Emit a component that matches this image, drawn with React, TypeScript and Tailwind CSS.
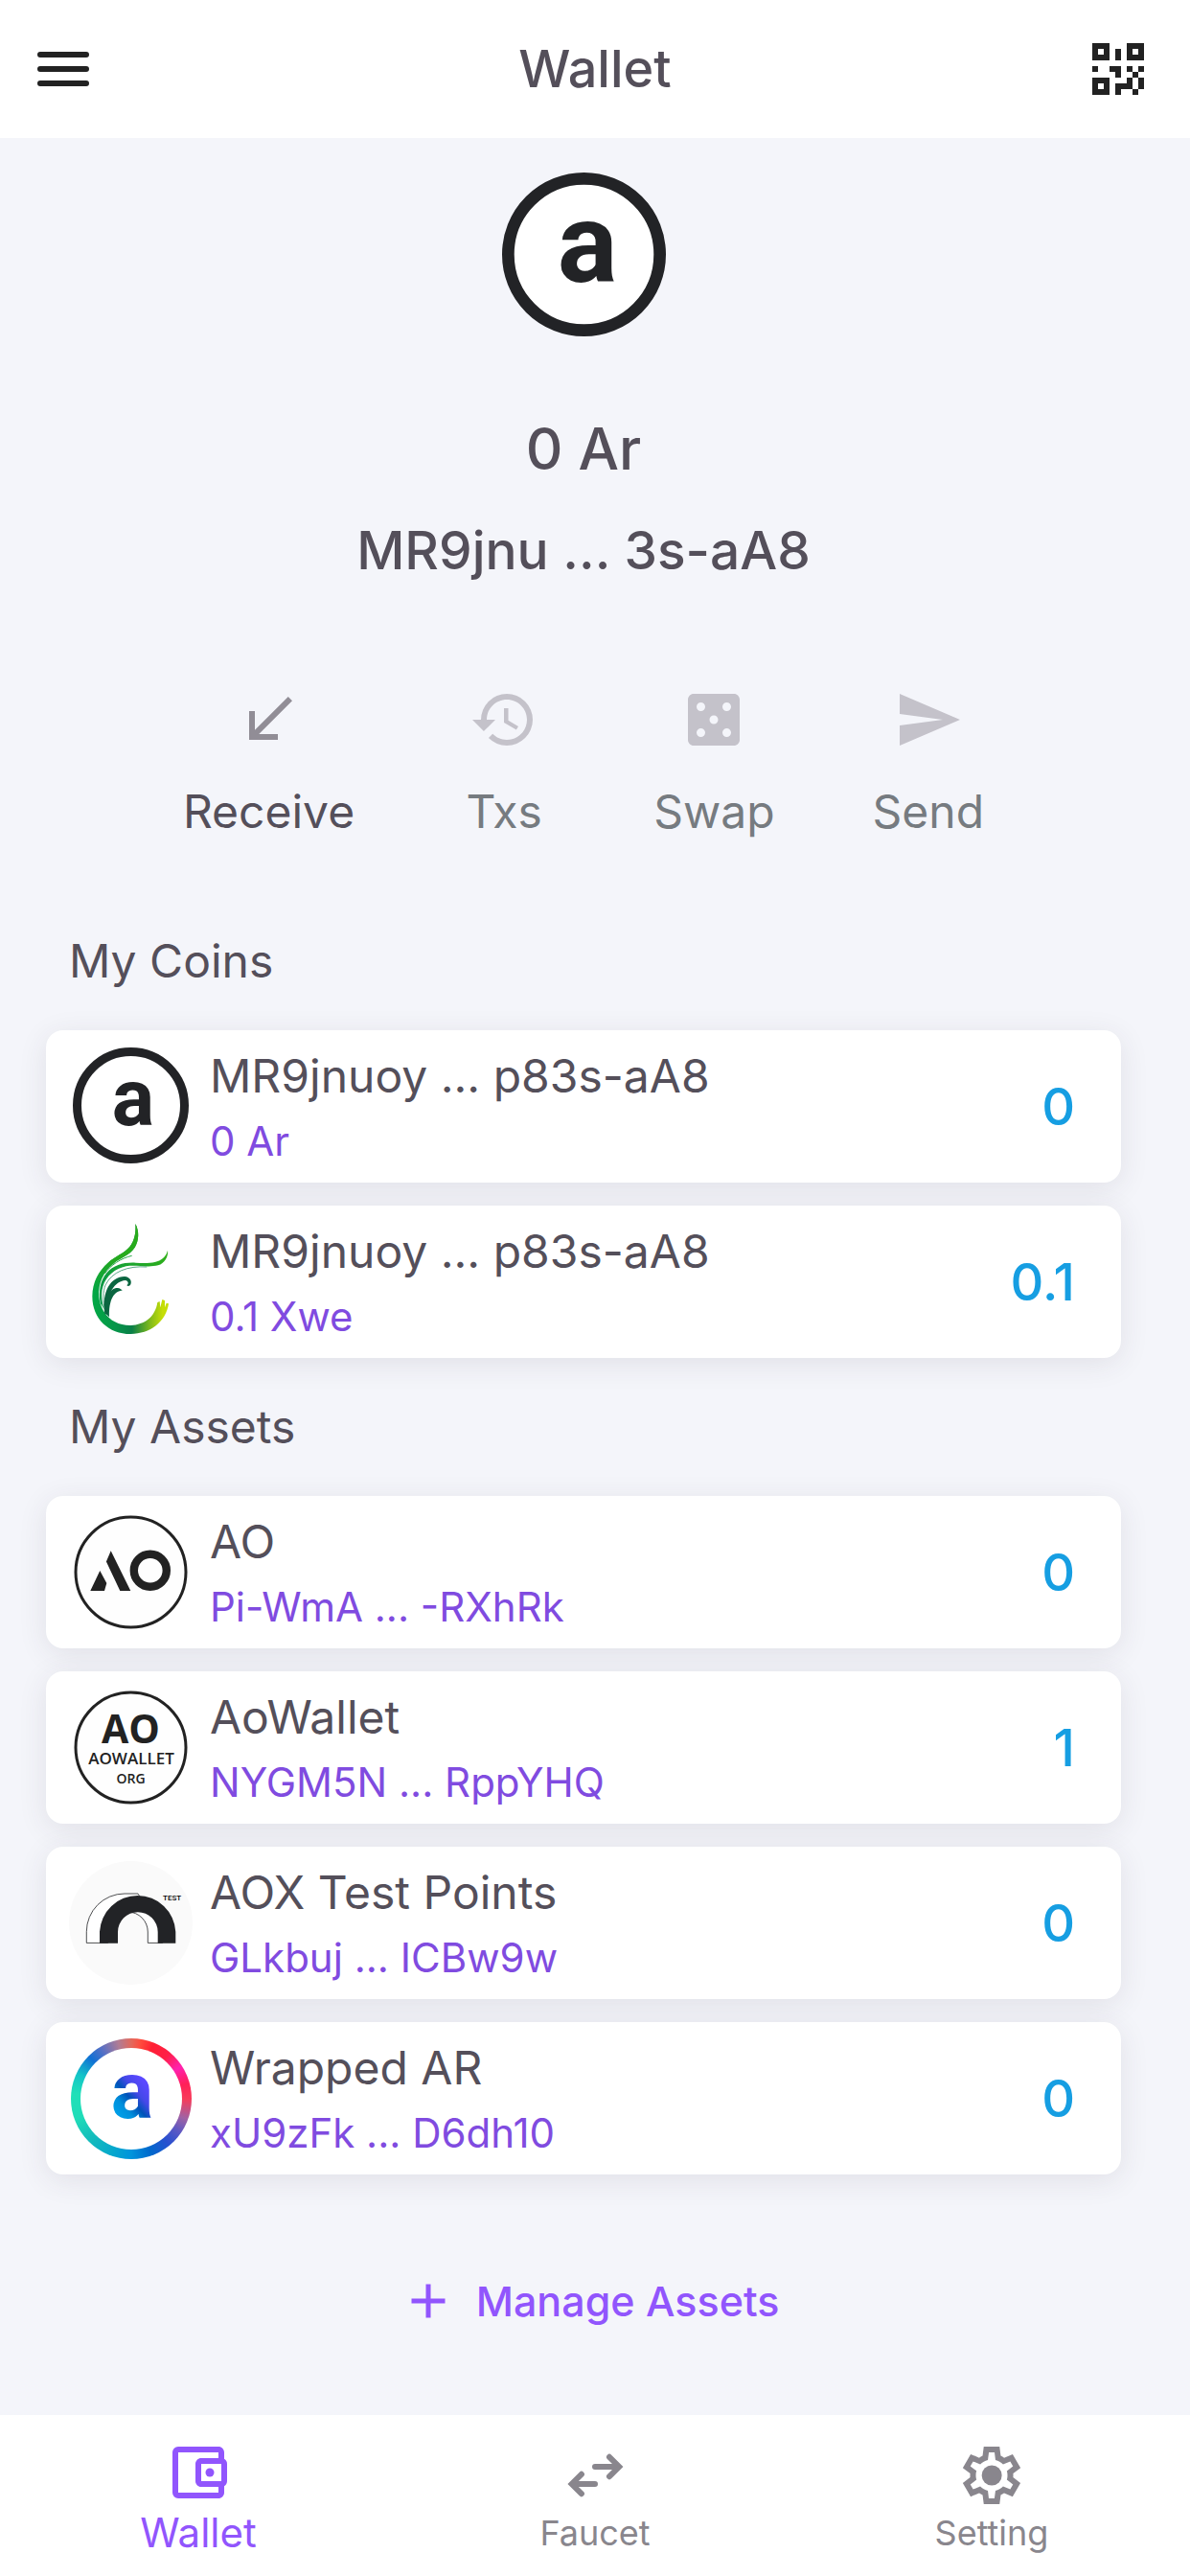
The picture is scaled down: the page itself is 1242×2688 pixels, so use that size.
import type { ReactNode } from 'react';
import { MdAdd, MdCallReceived, MdCasino, MdHistory, MdOutlineAccountBalanceWallet, MdSend } from 'react-icons/md';

function MenuIcon() {
  return (
    <svg viewBox="0 0 24 24" className="size-18" fill="none" stroke="currentColor" strokeWidth="2" strokeLinecap="round" aria-hidden="true">
      <path d="M4 7h16M4 12h16M4 17h16" />
    </svg>
  );
}

function QrIcon() {
  return (
    <svg viewBox="0 0 24 24" className="size-18" fill="currentColor" aria-hidden="true">
      <path d="M3 11H5V13H3V11M11 5H13V9H11V5M9 11H13V15H11V13H9V11M15 11H17V13H19V11H21V13H19V15H21V19H19V21H17V19H13V21H11V17H15V15H17V13H15V11M19 19V15H17V19H19M15 3H21V9H15V3M17 5V7H19V5H17M3 3H9V9H3V3M5 5V7H7V5H5M3 15H9V21H3V15M5 17V19H7V17H5Z" />
    </svg>
  );
}

function SwapIcon() {
  return (
    <svg viewBox="0 0 24 24" className="size-18" fill="none" stroke="currentColor" strokeWidth="2" strokeLinecap="round" aria-hidden="true">
      <path d="M12 9h8M17 5.6l3.4 3.4l-3.4 3.4M12 15H4M7.3 11.6L3.9 15l3.4 3.4" />
    </svg>
  );
}

function GearIcon() {
  return (
    <svg viewBox="0 0 24 24" className="size-18" fill="currentColor" aria-hidden="true">
      <path
        fillRule="evenodd"
        d="m9.25 22l-.4-3.2q-.325-.125-.612-.3t-.563-.375L4.7 19.375l-2.75-4.75l2.575-1.95Q4.5 12.5 4.5 12.338v-.675q0-.163.025-.338L1.95 9.375l2.75-4.75l2.975 1.25q.275-.2.575-.375t.6-.3l.4-3.2h5.5l.4 3.2q.325.125.613.3t.562.375l2.975-1.25l2.75 4.75l-2.575 1.95q.025.175.025.338v.674q0 .163-.05.338l2.575 1.95l-2.75 4.75l-2.95-1.25q-.275.2-.575.375t-.6.3l-.4 3.2zM11 20h1.975l.35-2.65q.775-.2 1.438-.587t1.212-.938l2.475 1.025l.975-1.7l-2.15-1.625q.125-.35.175-.737T17.5 12t-.05-.787t-.175-.738l2.15-1.625l-.975-1.7l-2.475 1.05q-.55-.575-1.212-.962t-1.438-.588L13 4h-1.975l-.35 2.65q-.775.2-1.437.588t-1.213.937L5.55 7.15l-.975 1.7l2.15 1.6q-.125.375-.175.75t-.05.8q0 .4.05.775t.175.75l-2.15 1.625l.975 1.7l2.475-1.05q.55.575 1.213.963t1.437.587z"
      />
      <circle cx="12.05" cy="12" r="3.5" />
    </svg>
  );
}

function ArweaveShapes() {
  return (
    <>
      <circle cx="64.5" cy="63.5" r="56" fill="#fff" stroke="#222326" strokeWidth="9" />
      <text x="67" y="84" textAnchor="middle" fontFamily="Roboto, sans-serif" fontWeight="700" fontSize="83" fill="#222326">a</text>
    </>
  );
}

function ArweaveLogo() {
  return <svg viewBox="0 0 129 129" className="size-[129px]" aria-hidden="true"><ArweaveShapes /></svg>;
}

function XweLogo() {
  return (
    <svg viewBox="6 576 387 387" className="size-[129px]" aria-hidden="true">
      <defs>
        <linearGradient id="xwe-ring" gradientUnits="userSpaceOnUse" x1="79" y1="0" x2="318" y2="0">
          <stop offset="0" stopColor="#02a845" />
          <stop offset="0.3" stopColor="#06964a" />
          <stop offset="0.52" stopColor="#0a7f47" />
          <stop offset="0.75" stopColor="#7db81c" />
          <stop offset="0.92" stopColor="#c5de06" />
        </linearGradient>
        <linearGradient id="xwe-fade" gradientUnits="userSpaceOnUse" x1="0" y1="690" x2="0" y2="800">
          <stop offset="0" stopColor="#27ab1c" />
          <stop offset="1" stopColor="#27ab1c" stopOpacity="0" />
        </linearGradient>
        <linearGradient id="xwe-leaf" gradientUnits="userSpaceOnUse" x1="315" y1="680" x2="105" y2="830">
          <stop offset="0" stopColor="#30b018" />
          <stop offset="1" stopColor="#04964a" />
        </linearGradient>
      </defs>
      <path fill="url(#xwe-ring)" d="M214 588C226 610 226 640 212 662C196 686 168 694 148 710C112 738 97 775 100 815C101 830 106 850 118 866C132 890 165 907 200 906C242 904 276 880 283 834L290 831L292 850L298 825L306 828L306 850L311 836L318 838C310 895 260 933 199 933C130 933 79 885 79 815C79 770 100 735 128 710C150 690 180 680 196 660C212 640 216 615 214 588Z" />
      <path fill="url(#xwe-fade)" d="M214 588C226 610 226 640 212 662C196 686 168 694 148 710C112 738 97 775 100 815L79 815C79 770 100 735 128 710C150 690 180 680 196 660C212 640 216 615 214 588Z" />
      <path fill="url(#xwe-leaf)" d="M315 671C318 690 305 712 285 718C255 726 215 716 185 721C150 728 122 752 112 785C106 805 108 830 116 856L104 836C98 800 104 765 124 742C146 716 180 708 215 710C250 712 282 712 300 696C308 690 313 680 315 671Z" />
      <path fill="none" stroke="#2aa84a" strokeWidth="3" d="M203 688C170 695 135 718 118 744" />
      <path fill="none" stroke="#0b7a4c" strokeWidth="2" d="M250 723C190 719 140 738 120 780C112 800 112 830 118 855" />
      <path fill="#0a6640" d="M118 870C108 800 136 754 180 753C197 754 204 768 199 778C196 784 189 784 187 780C194 776 192 767 182 765C150 768 122 805 126 872Z" />
      <path fill="#0a6640" d="M124 872C116 820 133 789 158 789C166 790 170 793 173 797C148 797 130 825 132 880Z" />
    </svg>
  );
}

function AoLogo() {
  return (
    <svg viewBox="0 0 129 129" className="size-[129px]" aria-hidden="true">
      <circle cx="64.5" cy="64.5" r="57.5" fill="#fefefe" stroke="#222" strokeWidth="3" />
      <path fill="#222" d="M43.7 42.3L64.3 84H53.3L38.9 53.5ZM32.3 63L39.3 76L37 84H22.3Z" />
      <circle cx="84.8" cy="62.8" r="17" fill="none" stroke="#222" strokeWidth="8.4" />
    </svg>
  );
}

function AoWalletLogo() {
  return (
    <svg viewBox="0 0 129 129" className="size-[129px]" fontFamily="'Open Sans', sans-serif" fontWeight="700" textAnchor="middle" fill="#222" aria-hidden="true">
      <circle cx="64.5" cy="64.5" r="57.5" fill="#fefefe" stroke="#222" strokeWidth="3" />
      <text x="64.5" y="60" fontSize="41">AO</text>
      <text x="65" y="82" fontSize="17" fontWeight="600">AOWALLET</text>
      <text x="64.5" y="102" fontSize="14" fontWeight="600">ORG</text>
    </svg>
  );
}

function AoxLogo() {
  return (
    <svg viewBox="0 0 129 129" className="size-[129px]" aria-hidden="true">
      <circle cx="64.5" cy="64.5" r="64.5" fill="#fafafa" />
      <path fill="#fff" stroke="#222326" strokeWidth="0.8" d="M18.3 85.4V73.7A39.7 39.7 0 0 1 58 34H72L97.7 73.7V85.4H82.3V74A21 21 0 0 0 61.5 53A21 21 0 0 0 40.7 74V85.4Z" />
      <path fill="#222326" d="M32 85.8V73.7A39.7 39.7 0 0 1 111.3 73.7V85.8H92.7V74A20.8 20.8 0 0 0 51 74V85.8Z" />
      <text x="98" y="40.7" fontFamily="Roboto, sans-serif" fontWeight="500" fontSize="8" fill="#000">TEST</text>
    </svg>
  );
}

function WrappedArLogo() {
  return (
    <div className="grid size-[129px] place-items-center" aria-hidden="true">
      <div className="size-[126px] rounded-full bg-[conic-gradient(#e2695c,#ff4a3c_10deg,#ff2034_22deg,#ff1f48_40deg,#ff22b0_57deg,#ff2058_75deg,#f83a58_90deg,#a062a4_110deg,#5a58c4_125deg,#2850d0_140deg,#0068cc_160deg,#0094dc_180deg,#06a8cc_200deg,#14bcbc_225deg,#20dcb8_250deg,#1fe0b8_275deg,#14c4c8_295deg,#1070d4_315deg,#5a70c4_330deg,#b07c94_347deg,#e2695c)]">
        <svg viewBox="0 0 126 126" className="size-[126px]">
          <defs>
            <linearGradient id="war-letter" gradientUnits="userSpaceOnUse" x1="45" y1="76" x2="78" y2="48">
              <stop offset="0" stopColor="#009fe8" />
              <stop offset="0.25" stopColor="#0090dc" />
              <stop offset="0.5" stopColor="#0052b8" />
              <stop offset="0.72" stopColor="#4548e8" />
              <stop offset="1" stopColor="#5a48ff" />
            </linearGradient>
          </defs>
          <circle cx="63" cy="63" r="53" fill="#fff" />
          <text x="64" y="83" textAnchor="middle" fontFamily="Roboto, sans-serif" fontWeight="700" fontSize="83" fill="url(#war-letter)">a</text>
        </svg>
      </div>
    </div>
  );
}

type Entry = { title: string; subtitle: string; amount: string; logo: ReactNode };

const coins: Entry[] = [
  { title: 'MR9jnuoy ... p83s-aA8', subtitle: '0 Ar', amount: '0', logo: <ArweaveLogo /> },
  { title: 'MR9jnuoy ... p83s-aA8', subtitle: '0.1 Xwe', amount: '0.1', logo: <XweLogo /> },
];

const assets: Entry[] = [
  { title: 'AO', subtitle: 'Pi-WmA ... -RXhRk', amount: '0', logo: <AoLogo /> },
  { title: 'AoWallet', subtitle: 'NYGM5N ... RppYHQ', amount: '1', logo: <AoWalletLogo /> },
  { title: 'AOX Test Points', subtitle: 'GLkbuj ... ICBw9w', amount: '0', logo: <AoxLogo /> },
  { title: 'Wrapped AR', subtitle: 'xU9zFk ... D6dh10', amount: '0', logo: <WrappedArLogo /> },
];

function Section({ title, entries }: { title: string; entries: Entry[] }) {
  return (
    <section className="pt-9">
      <h2 className="px-6 text-[48px] leading-[72px]">{title}</h2>
      <ul className="mt-9 flex flex-col gap-6">
        {entries.map((entry, i) => (
          <li key={i} className="flex items-center rounded-[18px] bg-white py-3 pr-12 pl-6 shadow-[0_6px_30px_rgba(58,53,65,0.1)]">
            <div className="-my-3 shrink-0">{entry.logo}</div>
            <div className="ml-[18px] min-w-0 flex-1">
              <p className="truncate text-[48px] leading-[72px]">{entry.title}</p>
              <p className="truncate text-[42px] leading-[63px] text-[#804be0]">{entry.subtitle}</p>
            </div>
            <p className="text-[54px] leading-[72px] font-medium text-[#169ee2]">{entry.amount}</p>
          </li>
        ))}
      </ul>
    </section>
  );
}

const actions = [
  { label: 'Receive', icon: <MdCallReceived />, enabled: true },
  { label: 'Txs', icon: <MdHistory />, enabled: false },
  { label: 'Swap', icon: <MdCasino />, enabled: false },
  { label: 'Send', icon: <MdSend />, enabled: false },
];

const tabs = [
  { label: 'Wallet', icon: <MdOutlineAccountBalanceWallet />, active: true },
  { label: 'Faucet', icon: <SwapIcon />, active: false },
  { label: 'Setting', icon: <GearIcon />, active: false },
];

export default function App() {
  return (
    <div className="flex min-h-screen flex-col bg-[#f4f5fa] font-[Inter,sans-serif] text-[#544f5a]">
      <header className="grid h-36 grid-cols-[1fr_auto_1fr] items-center bg-white">
        <button type="button" aria-label="Menu" className="justify-self-start pl-[30px] text-[#222]"><MenuIcon /></button>
        <h1 className="text-[54px] leading-[72px] font-medium">Wallet</h1>
        <button type="button" aria-label="Scan QR code" className="justify-self-end pr-[39px] text-[#222]"><QrIcon /></button>
      </header>

      <main className="flex-1 pr-18 pl-12">
        <div className="flex flex-col items-center pt-9">
          <svg viewBox="4 3 121 121" className="size-[171px]" role="img" aria-label="Arweave"><ArweaveShapes /></svg>
          <p className="mt-[69px] text-[60px] leading-[96px] font-medium">0 Ar</p>
          <p className="mt-4 text-[55px] leading-[84px] font-medium">MR9jnu ... 3s-aA8</p>
        </div>

        <div className="flex justify-center gap-[54px] pt-[99px] pb-12">
          {actions.map(({ label, icon, enabled }) => (
            <button key={label} type="button" disabled={!enabled} className="group flex min-w-[156px] flex-col items-center gap-6 px-6 text-[48px] leading-[72px] disabled:text-[#767b80]">
              <span className="text-[72px] text-[#918d96] group-disabled:text-[#c4c2ca]">{icon}</span>
              {label}
            </button>
          ))}
        </div>

        <Section title="My Coins" entries={coins} />
        <Section title="My Assets" entries={assets} />

        <div className="flex justify-center pt-[93px] pl-3">
          <button type="button" className="flex h-[78px] items-center gap-5 text-[43px] font-medium text-[#9155fd]">
            <MdAdd className="size-[60px]" />
            Manage Assets
          </button>
        </div>
      </main>

      <nav className="grid h-42 grid-cols-3 bg-white pt-1.5">
        {tabs.map(({ label, icon, active }) => (
          <a
            key={label}
            href={`#${label.toLowerCase()}`}
            aria-current={active ? 'page' : undefined}
            className="flex flex-col items-center justify-center text-[36px] leading-[48px] text-[#89868d] aria-[current=page]:text-[42px] aria-[current=page]:leading-[54px] aria-[current=page]:text-[#9155fd]"
          >
            <span className="text-[72px] leading-none">{icon}</span>
            {label}
          </a>
        ))}
      </nav>
    </div>
  );
}
